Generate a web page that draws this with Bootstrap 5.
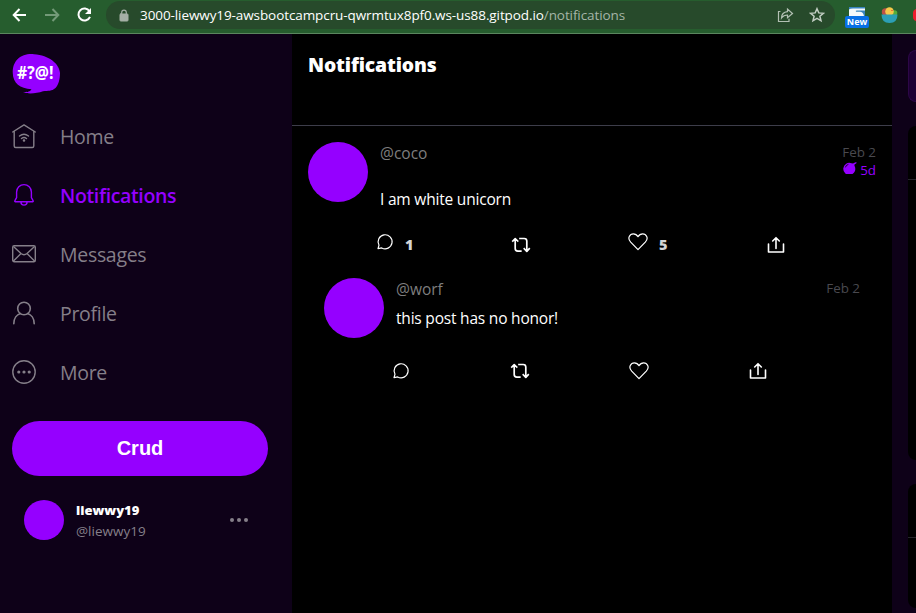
<!DOCTYPE html>
<html lang="en">
<head>
<meta charset="utf-8">
<meta name="viewport" content="width=device-width, initial-scale=1">
<title>Notifications</title>
<link href="https://cdn.jsdelivr.net/npm/bootstrap@5.3.0/dist/css/bootstrap.min.css" rel="stylesheet">
<style>
:root{--violet:#9500ff;--ink:#0e0118;--muted:#857f89}
body{font-family:"Open Sans","Noto Sans",sans-serif;background:#000;color:#fff;height:613px;line-height:20px;overflow:hidden}
svg{display:block;flex:none;fill:none;stroke:currentColor;stroke-linecap:round;stroke-linejoin:round}
svg.solid{stroke:none}
.browser{height:34px;background:#265d2e;border-bottom:1px solid #5b865f;padding:0 0 3px 12px}
.address{width:730px;height:28px;margin-left:13px;background:#274a2b;border-radius:14px;padding:0 9px 0 12px}
.url{font-size:13.5px;letter-spacing:-.09px;margin-left:11px}
.url span{color:#a5b5a7}
.ext{width:24px;margin-left:10px}
.new-tag{background:#0870e6;font-size:9px;font-weight:700;line-height:12px;border-radius:2px;height:12px}
.workspace{height:579px}
.side{width:292px;background:var(--ink);padding:18px 24px 0 12px}
.logo{height:44px}
.menu{margin-top:11px}
.menu .nav-link{height:59px;padding:0;color:var(--muted);font-size:19.5px;letter-spacing:-.3px;gap:24px}
.menu .nav-link.active{color:var(--violet);font-weight:600;letter-spacing:-.35px}
.crud{height:55px;border-radius:28px;background:var(--violet)!important;color:#fff!important;font:700 20px "Liberation Sans",Arial,sans-serif;margin-top:19px}
.account{padding:24px 19px 0 12px}
.names{margin-left:12px;line-height:21px;font-size:13.5px}
.names .full{font-size:13px;font-weight:800}
.names .at{color:var(--muted)}
.avatar{width:60px;height:60px;background:var(--violet);flex:none}
.avatar-sm{width:40px;height:40px}
.account .avatar-sm,.account svg{margin-bottom:2px}
.feed{width:600px}
.feed-head{height:92px;border-bottom:1px solid #3d3d4a;padding:21px 16px}
.feed-head h1{font-size:19.3px;line-height:20px;font-weight:800;letter-spacing:-.15px}
.post{padding:16px 16px 0}
.reply{padding:16px 32px 0;margin-top:7px}
.body-col{margin-left:12px;padding-top:1px}
.handle{font-size:15.5px;color:#7e7e7e}
.date{font-size:13.4px;color:#49494f;line-height:18px;margin-top:1px}
.left-days{color:var(--violet);font-size:13.4px;line-height:19px}
.message{font-size:15.5px;letter-spacing:-.2px}
.count{font-size:14.5px;font-weight:800;color:#d5d5d5;margin-left:11px}
.actions{margin-left:68px;height:20px}
.rail{width:24px;background:var(--ink);padding:16px 0 0 16px}
.search-end{height:52px;background:#1d0034;border:1px solid #2c0747;border-right:0;border-radius:9px 0 0 9px}
.panel{background:#000;border-radius:8px 0 0 8px;margin-top:24px}
.panel div{border-bottom:1px solid #25252b;height:54px}
</style>
<script src="https://cdn.jsdelivr.net/npm/bootstrap@5.3.0/dist/js/bootstrap.bundle.min.js"></script>
</head>
<body>
<svg width="0" height="0" class="position-absolute">
<symbol id="comment" viewBox="0 0 18 18"><path d="M2 15.700 3 12.200A7 7 0 1 1 5.700 14.900Z"/></symbol>
<symbol id="repost" viewBox="0 0 20 18"><path d="M1.800 5 4.200 2.600 6.700 5M4.200 3v9.500q0 2.600 2.600 2.600h3M9 2.500h4.200q2.600 0 2.600 2.600v10M13.300 12.800l2.500 2.500 2.400-2.500" stroke-linecap="square"/></symbol>
<symbol id="heart" viewBox="0 0 20 18"><path d="M10 16.600 2.700 9.200C-1.200 5 2 .9 5.300.9 7.700.9 9 2 10 3.700 11 2 12.300.9 14.700.9 18 .9 21.200 5 17.300 9.200Z"/></symbol>
<symbol id="share" viewBox="0 0 18 18"><path d="M1.500 8v8h15V8M9 12.500V1.800M5.700 5 9 1.700 12.300 5"/></symbol>
</svg>

<header class="browser d-flex align-items-center">
<svg width="16" height="16" viewBox="0 0 16 16" stroke-width="2"><path d="M14 8H2M7.500 2 1.700 8l5.800 6" stroke-linecap="butt" stroke-linejoin="miter"/></svg>
<svg width="16" height="16" viewBox="0 0 16 16" stroke-width="2" style="color:#739a78;margin-left:16px"><path d="M1 8h12M8.500 2l5.800 6-5.800 6" stroke-linecap="butt" stroke-linejoin="miter"/></svg>
<svg width="17" height="16" viewBox="0 0 17 16" stroke-width="2" style="margin-left:16px"><path d="M13.500 4.200A6 6 0 1 0 14 9.800" stroke-linecap="butt"/><path d="M15 1v6H9Z" fill="currentColor" stroke="none"/></svg>
<div class="address d-flex align-items-center">
<svg width="10" height="13" viewBox="0 0 10 13" style="color:#a4afa5;margin-left:1px"><rect x="1" y="5" width="8" height="7" rx=".7" fill="currentColor" stroke-width="1"/><path d="M2.700 5V3.400a2.300 2.300 0 0 1 4.600 0V5" stroke-width="1.200"/></svg>
<div class="url text-nowrap flex-grow-1">3000-liewwy19-awsbootcampcru-qwrmtux8pf0.ws-us88.gitpod.io<span>/notifications</span></div>
<svg width="17" height="16" viewBox="0 0 17 16" stroke-width="1.200" style="color:#b3c0b4;margin-right:15px"><path d="M3 4.500H1.500v10h10.500V12M4.500 11C4.600 7 7 5 10.500 4.700V2l5 4.500-5 4.200V8C7.700 8 5.900 9 4.500 11Z" stroke-linejoin="miter"/></svg>
<svg width="16" height="16" viewBox="0 0 16 16" stroke-width="1.500" style="color:#c2cdc3;margin-right:1px"><path d="m8 1.700 1.800 4.200 4.600.4-3.500 3 1.100 4.500L8 11.400l-4 2.400 1.100-4.500-3.500-3 4.600-.4Z" stroke-linejoin="miter"/></svg>
</div>
<div class="ext" style="padding-top:4px">
<svg class="solid mx-auto" width="16" height="9" viewBox="0 0 16 9"><path fill="#3784bd" d="M0 0h16v9H0Z"/><path fill="#f4f8fb" d="M0 2.500Q1 1.500 4 1.500h12v2H8q-2 0-1 1.300h4q3 0 4 4.200H0Z"/></svg>
<div class="new-tag text-center">New</div>
</div>
<svg class="solid" width="17" height="17" viewBox="0 0 17 17" style="margin-left:12px"><circle cx="4.500" cy="5" r="3.700" fill="#bd5146"/><circle cx="13.500" cy="6" r="2.800" fill="#54ac3d"/><circle cx="8.500" cy="4.500" r="4.300" fill="#f5c84b"/><path d="M6 3.500h1M10 3h2v1h-2Z" fill="#e8753a"/><path d="M.5 7.500h16q0 8.500-8 8.500t-8-8.500Z" fill="#2c9fb5"/></svg>
<svg class="solid" width="3" height="12" viewBox="0 0 3 12" style="margin-left:15px"><path d="M3 0Q0 1 0 4v4q0 3 3 4Z" fill="#ee1c2e"/></svg>
</header>

<div class="workspace d-flex">
<aside class="side flex-shrink-0">
<svg class="logo solid" width="49" height="44" viewBox="0 0 49 44"><path fill="#9500ff" d="M.8 21.500C0 8 10 1 22 2.200 37 3 47.500 12 48 21c0 6-1.500 12-4.500 15-4 3.500-7 2.500-12.500 3.200-6 2-14 3.300-20 1.100 5 0 7-.8 8.500-3C8 36.500 1 31 .8 21.500Z"/><text x="5" y="27" fill="#fff" font-family="Open Sans,sans-serif" font-weight="700" font-size="17" textLength="36.500" lengthAdjust="spacingAndGlyphs">#?@!</text></svg>
<nav class="nav flex-column menu">
<a class="nav-link d-flex align-items-center" href="#"><svg width="24" height="26" viewBox="0 0 24 26" stroke-width="1.400"><path d="M.7 8 12 .9 23.300 8M2.200 7.300V22q0 1.500 1.500 1.500h16.600q1.500 0 1.500-1.500V7.300M7.500 12q4.500-3.500 9 0M9.500 14.500q2.500-2 5 0"/><circle cx="12" cy="16.500" r=".6"/></svg><span>Home</span></a>
<a class="nav-link active d-flex align-items-center" href="#"><svg width="24" height="26" viewBox="0 0 24 26" stroke-width="1.400"><path d="M3.200 18.700q-.8-.2-.3-1l1.700-3V9a7.400 7.400 0 0 1 14.800 0v5.700l1.700 3q.5.8-.3 1ZM8.900 19a3.100 3.100 0 0 0 6.200 0"/></svg><span>Notifications</span></a>
<a class="nav-link d-flex align-items-center" href="#"><svg width="24" height="22" viewBox="0 0 24 22" stroke-width="1.400"><rect x=".7" y="1.700" width="22.600" height="16" rx="1.500"/><path d="m2 3 7 6.500q3 2.500 6 0L22 3M1.500 17l7-7M22.500 17l-7-7"/></svg><span>Messages</span></a>
<a class="nav-link d-flex align-items-center" href="#"><svg width="24" height="26" viewBox="0 0 24 26" stroke-width="1.600"><circle cx="12" cy="7.500" r="6.300"/><path d="M1.800 22.800c0-5.500 3-9.300 6.700-10.300M15.500 12.500c3.700 1 6.700 4.800 6.700 10.300"/></svg><span>Profile</span></a>
<a class="nav-link d-flex align-items-center" href="#"><svg width="24" height="26" viewBox="0 0 24 26" stroke-width="1.400"><circle cx="12" cy="12" r="11.200"/><g fill="currentColor" stroke="none"><circle cx="6.800" cy="12" r="1.600"/><circle cx="12" cy="12" r="1.600"/><circle cx="17.200" cy="12" r="1.600"/></g></svg><span>More</span></a>
</nav>
<button class="btn crud w-100 p-0 border-0">Crud</button>
<div class="account d-flex align-items-center">
<div class="avatar avatar-sm rounded-circle"></div>
<div class="names flex-grow-1"><div class="full">liewwy19</div><div class="at">@liewwy19</div></div>
<svg class="solid" width="20" height="6" viewBox="0 0 20 6"><g fill="#857f89"><circle cx="3" cy="3" r="2"/><circle cx="10" cy="3" r="2"/><circle cx="17" cy="3" r="2"/></g></svg>
</div>
</aside>

<main class="feed flex-shrink-0">
<div class="feed-head"><h1 class="m-0">Notifications</h1></div>
<article class="post">
<div class="d-flex">
<div class="avatar rounded-circle"></div>
<div class="body-col flex-grow-1"><div class="handle">@coco</div><div class="message" style="margin-top:26px">I am white unicorn</div></div>
<div class="text-end"><div class="date">Feb 2</div>
<div class="left-days d-flex justify-content-end"><svg class="solid" width="14" height="12" viewBox="0 0 14 12" style="margin:1px 3px 0 0"><path fill="#9500ff" d="M8.500 1.300 10 1.600 12.500.3l1.500.4-2.700 2 .4 1.600A6 6 0 1 1 8.500 1.300Z"/><path d="M2.500 5q.5-2 2.500-2.500" stroke="#000" stroke-width=".8"/></svg>5d</div></div>
</div>
<div class="actions d-flex align-items-center" style="margin-top:26px">
<div class="d-flex align-items-center" style="width:135px"><svg width="18" height="18" stroke-width="1.200" style="margin-bottom:6px"><use href="#comment"/></svg><span class="count">1</span></div>
<div style="width:117px"><svg width="20" height="18" stroke-width="1.700"><use href="#repost"/></svg></div>
<div class="d-flex align-items-center" style="width:139px"><svg width="20" height="18" stroke-width="1.200" style="margin-bottom:6px"><use href="#heart"/></svg><span class="count">5</span></div>
<svg width="18" height="18" stroke-width="1.600"><use href="#share"/></svg>
</div>
</article>
<article class="reply">
<div class="d-flex">
<div class="avatar rounded-circle"></div>
<div class="body-col flex-grow-1"><div class="handle">@worf</div><div class="message" style="margin-top:9px">this post has no honor!</div></div>
<div class="date">Feb 2</div>
</div>
<div class="actions d-flex align-items-center" style="margin-top:23px">
<div style="width:118px"><svg width="18" height="18" stroke-width="1.200"><use href="#comment"/></svg></div>
<div style="width:119px"><svg width="20" height="18" stroke-width="1.700"><use href="#repost"/></svg></div>
<div style="width:120px"><svg width="20" height="18" stroke-width="1.200"><use href="#heart"/></svg></div>
<svg width="18" height="18" stroke-width="1.600"><use href="#share"/></svg>
</div>
</article>
</main>

<aside class="rail flex-shrink-0">
<div class="search-end"></div>
<div class="panel" style="height:334px"><div></div></div>
<div class="panel" style="height:124px"><div></div></div>
</aside>
</div>
</body>
</html>
